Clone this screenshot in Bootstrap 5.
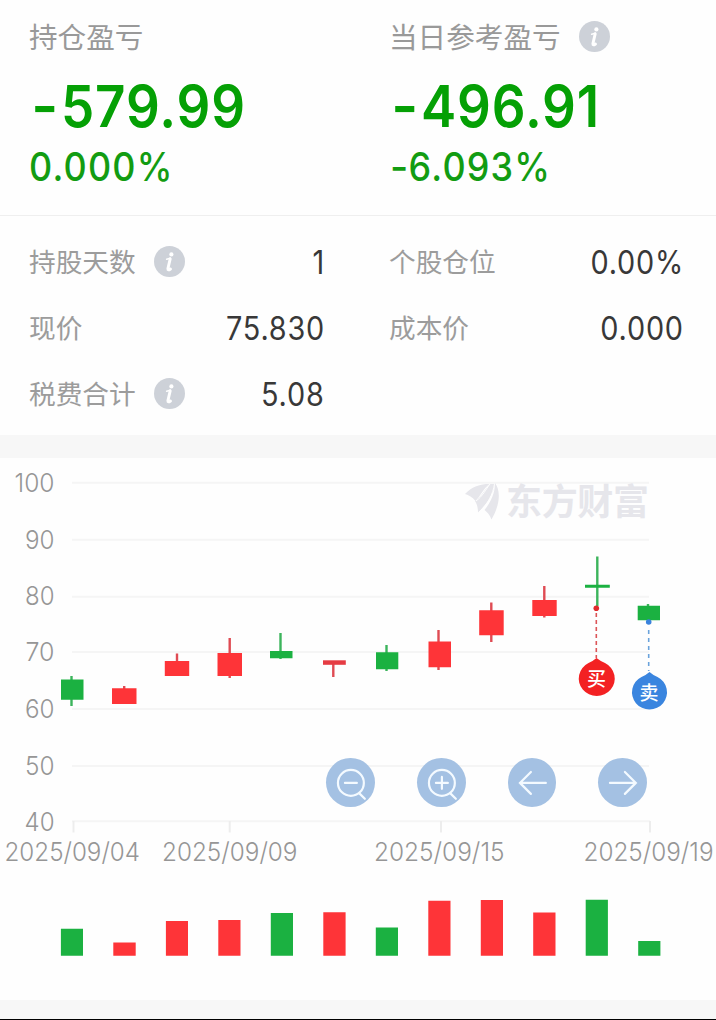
<!DOCTYPE html>
<html lang="zh-CN">
<head>
<meta charset="utf-8">
<meta name="viewport" content="width=device-width, initial-scale=1">
<title>持仓盈亏</title>
<link href="https://cdn.jsdelivr.net/npm/bootstrap@5.3.0/dist/css/bootstrap.min.css" rel="stylesheet">
<style>
body{background:#fefefe;color:#333;font-family:Inter,"Noto Sans CJK SC",sans-serif;height:1020px;overflow:hidden}
.pane-l{padding-left:29px;padding-right:36px;width:360px}
.pane-r{padding-left:29px;padding-right:33px;width:356px}
.summary{height:216px;border-bottom:1px solid #efefef}
.sum-title{height:73px;font-size:28.6px;color:#999;font-weight:400}
.sum-title span{padding-top:4px}
.stat-name{padding-top:2px}
.money,.pct{transform:scaleX(.912);transform-origin:left;white-space:nowrap}
.money{height:66px;line-height:66px;font-size:58px;font-weight:600;color:#05a005;letter-spacing:1px;padding-left:4px}
.minus{display:inline-block;transform:scaleX(1.1)}
.money .minus{margin-right:3px}
.pct{height:54px;line-height:57px;font-size:39.4px;font-weight:500;color:#129c12;letter-spacing:1.3px}
.pane-r .pct{padding-left:2px}
.stats{height:219px;padding-top:12px}
.stat-line{height:66px}
.stat-name{font-size:26.7px;font-weight:400;color:#9c9c9c}
.stat-val{font-size:32px;font-weight:400;color:#383838;transform:scaleX(.9);transform-origin:right;letter-spacing:.9px;padding-top:3px;margin-right:-1px}
.info{width:31px;height:31px;margin-left:18px}
.gutter{background:#f7f7f7;height:23px}
.chart{height:542px}
.chart-tools{left:326px;top:300px;gap:42px}
.tool-btn{width:48.8px;height:48.8px;background:#a4c1e3}
.foot{background:#f7f7f7;height:20px;border-bottom:1px solid #000}
.axis{font-size:26px;font-weight:350;fill:#969696}
</style>
</head>
<body>
<svg width="0" height="0" class="position-absolute">
  <defs>
    <symbol id="info" viewBox="0 0 31 31">
      <circle cx="15.5" cy="15.5" r="15.5" fill="#cdd1d8"/>
      <circle cx="17.4" cy="8.4" r="2.1" fill="#fff"/>
      <path d="M12.600 13.200q2-.2 3.800-1.200" fill="none" stroke="#fff" stroke-width="1.500" stroke-linecap="round"/>
      <path d="M16.200 12.900L13.900 22.600q-.2 2.400 2.600.4" fill="none" stroke="#fff" stroke-width="2.900" stroke-linecap="round" stroke-linejoin="round"/>
    </symbol>
  </defs>
</svg>

<section class="summary d-flex">
  <div class="pane-l">
    <div class="sum-title d-flex align-items-center"><span>持仓盈亏</span></div>
    <div class="money"><span class="minus">-</span>579.99</div>
    <div class="pct">0.000%</div>
  </div>
  <div class="pane-r">
    <div class="sum-title d-flex align-items-center"><span>当日参考盈亏</span><svg class="info"><use href="#info"/></svg></div>
    <div class="money"><span class="minus">-</span>496.91</div>
    <div class="pct"><span class="minus">-</span>6.093%</div>
  </div>
</section>

<section class="stats d-flex">
  <div class="pane-l">
    <div class="stat-line d-flex align-items-center"><span class="stat-name">持股天数</span><svg class="info"><use href="#info"/></svg><span class="stat-val ms-auto">1</span></div>
    <div class="stat-line d-flex align-items-center"><span class="stat-name">现价</span><span class="stat-val ms-auto">75.830</span></div>
    <div class="stat-line d-flex align-items-center"><span class="stat-name">税费合计</span><svg class="info"><use href="#info"/></svg><span class="stat-val ms-auto">5.08</span></div>
  </div>
  <div class="pane-r">
    <div class="stat-line d-flex align-items-center"><span class="stat-name">个股仓位</span><span class="stat-val ms-auto">0.00%</span></div>
    <div class="stat-line d-flex align-items-center"><span class="stat-name">成本价</span><span class="stat-val ms-auto">0.000</span></div>
  </div>
</section>
<div class="gutter"></div>

<section class="chart position-relative">
<svg class="d-block" width="716" height="542" viewBox="0 458 716 542">
  <!-- grid and ticks -->
  <path d="M72 482.7H649M72 539.8H649M72 596.8H649M72 652H649M72 709H649M72 766H649M72 821.3H650" stroke="#f5f5f5" stroke-width="2" fill="none"/>
  <path d="M73.5 821V832.5M229.7 821V832.5M441 821V832.5M650 821V832.5" stroke="#ededed" stroke-width="2" fill="none"/>
  <!-- brand watermark -->
  <g fill="#e6e6eb">
    <path d="M465 494C472 486.500 480 484 489.500 484C484 488 481 495 475.500 501C472 497 469 495 465 494Z"/>
    <path d="M475 501C482 496 485 489 490 484H495C493 495 487 504 478 512.500C478 508 477 504 475 501Z"/>
    <path d="M495 483C501 491 500 505 491.500 519.500C490 515 487 512 484.500 510C491 502 495 493 495 483Z"/>
    <path d="M476 501C483 496 486 489 490 484M479 512C488 504 493 494 494.500 484" stroke="#fefefe" stroke-width="1" fill="none"/>
    <text x="506" y="515" font-size="36" font-weight="700" textLength="143" font-family="Noto Sans CJK SC, sans-serif">东方财富</text>
  </g>
  <!-- price axis -->
  <g class="axis">
    <text x="14.500" y="491.800" textLength="40" lengthAdjust="spacingAndGlyphs">100</text>
    <text x="25" y="548.800" textLength="29.500" lengthAdjust="spacingAndGlyphs">90</text>
    <text x="25" y="605.300" textLength="29.500" lengthAdjust="spacingAndGlyphs">80</text>
    <text x="25.500" y="661.300" textLength="29" lengthAdjust="spacingAndGlyphs">70</text>
    <text x="25" y="718.300" textLength="29.500" lengthAdjust="spacingAndGlyphs">60</text>
    <text x="25" y="774.800" textLength="29.500" lengthAdjust="spacingAndGlyphs">50</text>
    <text x="24.500" y="831.300" textLength="30" lengthAdjust="spacingAndGlyphs">40</text>
    <text x="4.500" y="861.300" textLength="135.500" lengthAdjust="spacingAndGlyphs">2025/09/04</text>
    <text x="162" y="861.300" textLength="135.500" lengthAdjust="spacingAndGlyphs">2025/09/09</text>
    <text x="374" y="861.300" textLength="130.500" lengthAdjust="spacingAndGlyphs">2025/09/15</text>
    <text x="583.500" y="861.300" textLength="130" lengthAdjust="spacingAndGlyphs">2025/09/19</text>
  </g>
  <!-- candle wicks -->
  <g stroke-width="2.400" fill="none">
    <path stroke="#3cb45c" d="M71.500 676V706M280.500 633V659M386.500 645V671M597.300 556.500V606M648 604V610"/>
    <path stroke="#df4b53" d="M124.200 686V690M177 653.500V665M229.700 638V678M333.300 662V677M438.500 630V670M491.300 602.500V642M544.300 586V617.500"/>
  </g>
  <!-- candle bodies -->
  <path fill="#1bb141" d="M61 679.500h22.500v20.200H61zM270 651h22.500v7.300H270zM376 652.300h22.300v17H376zM585 584.800h24.800v2.900H585zM637.700 605.800H660v14.400h-22.300z"/>
  <path fill="#fe3438" d="M112 688.200h24.500V704H112zM164.800 661h24.400v15h-24.400zM217.500 653H242v23h-24.500zM428.500 641.500H451v25.800h-22.500zM479.200 610.300h24.500v24.900h-24.500zM532.300 600h24.400v16h-24.400z"/>
  <path fill="#e53c43" d="M323 660.300h22.800v4.500H323z"/>
  <!-- trade markers -->
  <path d="M596.300 613V658" stroke="#dc5558" stroke-width="1.600" stroke-dasharray="4 3"/>
  <circle cx="596.300" cy="608.200" r="2.800" fill="#e02a2c"/>
  <path d="M596.500 658Q601 661.500 605 663A18 17.500 0 1 1 588.500 663Q592.500 661.500 596.500 658Z" fill="#f32123"/>
  <path d="M648.700 630V671" stroke="#6ba3dc" stroke-width="1.600" stroke-dasharray="4 4"/>
  <circle cx="648.700" cy="622" r="2.800" fill="#3a83dc"/>
  <path d="M649.500 672Q653.500 675.500 657.500 677A17.500 17.200 0 1 1 641.500 677Q645.500 675.500 649.500 672Z" fill="#3a85df"/>
  <g fill="#fff" font-size="19" font-weight="500" text-anchor="middle" font-family="Noto Sans CJK SC, sans-serif">
    <text x="596.500" y="686">买</text>
    <text x="649" y="700">卖</text>
  </g>
  <!-- volume -->
  <path fill="#1bb141" d="M60.900 928.700H83v27H60.900zM270.800 913H293v42.700h-22.200zM375.800 927.500H398v28.200h-22.200zM585.700 899.700h22.200v56h-22.200zM638.200 941h22.200v14.700h-22.200z"/>
  <path fill="#fe3438" d="M113.300 942.500h22.400v13.200h-22.400zM165.900 921H188v34.700h-22.100zM218.300 920h22.200v35.700h-22.200zM323.300 912.200h22.300v43.500h-22.300zM428.300 900.800h22.200v54.900h-22.200zM480.800 900H503v55.700h-22.200zM533.200 912.500h22.300v43.200h-22.300z"/>
</svg>
<div class="chart-tools d-flex position-absolute">
  <button class="btn tool-btn rounded-circle border-0 p-0" aria-label="缩小"><svg class="d-block" viewBox="0 0 49 49" fill="none" stroke="#f4faff" stroke-width="2.200" stroke-linecap="round"><circle cx="25" cy="25" r="13"/><path d="M19 25H31M33.500 35.500L39 41"/></svg></button>
  <button class="btn tool-btn rounded-circle border-0 p-0" aria-label="放大"><svg class="d-block" viewBox="0 0 49 49" fill="none" stroke="#f4faff" stroke-width="2.200" stroke-linecap="round"><circle cx="25" cy="25" r="13"/><path d="M19 25H31M25 19V31M33.500 35.500L39 41"/></svg></button>
  <button class="btn tool-btn rounded-circle border-0 p-0" aria-label="向左"><svg class="d-block" viewBox="0 0 49 49" fill="none" stroke="#f4faff" stroke-width="2.200" stroke-linecap="round"><path d="M38 25H12M23 14L12 25L23 36"/></svg></button>
  <button class="btn tool-btn rounded-circle border-0 p-0" aria-label="向右"><svg class="d-block" viewBox="0 0 49 49" fill="none" stroke="#f4faff" stroke-width="2.200" stroke-linecap="round"><path d="M12 25H38M27 14L38 25L27 36"/></svg></button>
</div>
</section>
<div class="foot"></div>
<script src="https://cdn.jsdelivr.net/npm/bootstrap@5.3.0/dist/js/bootstrap.bundle.min.js"></script>
</body>
</html>
